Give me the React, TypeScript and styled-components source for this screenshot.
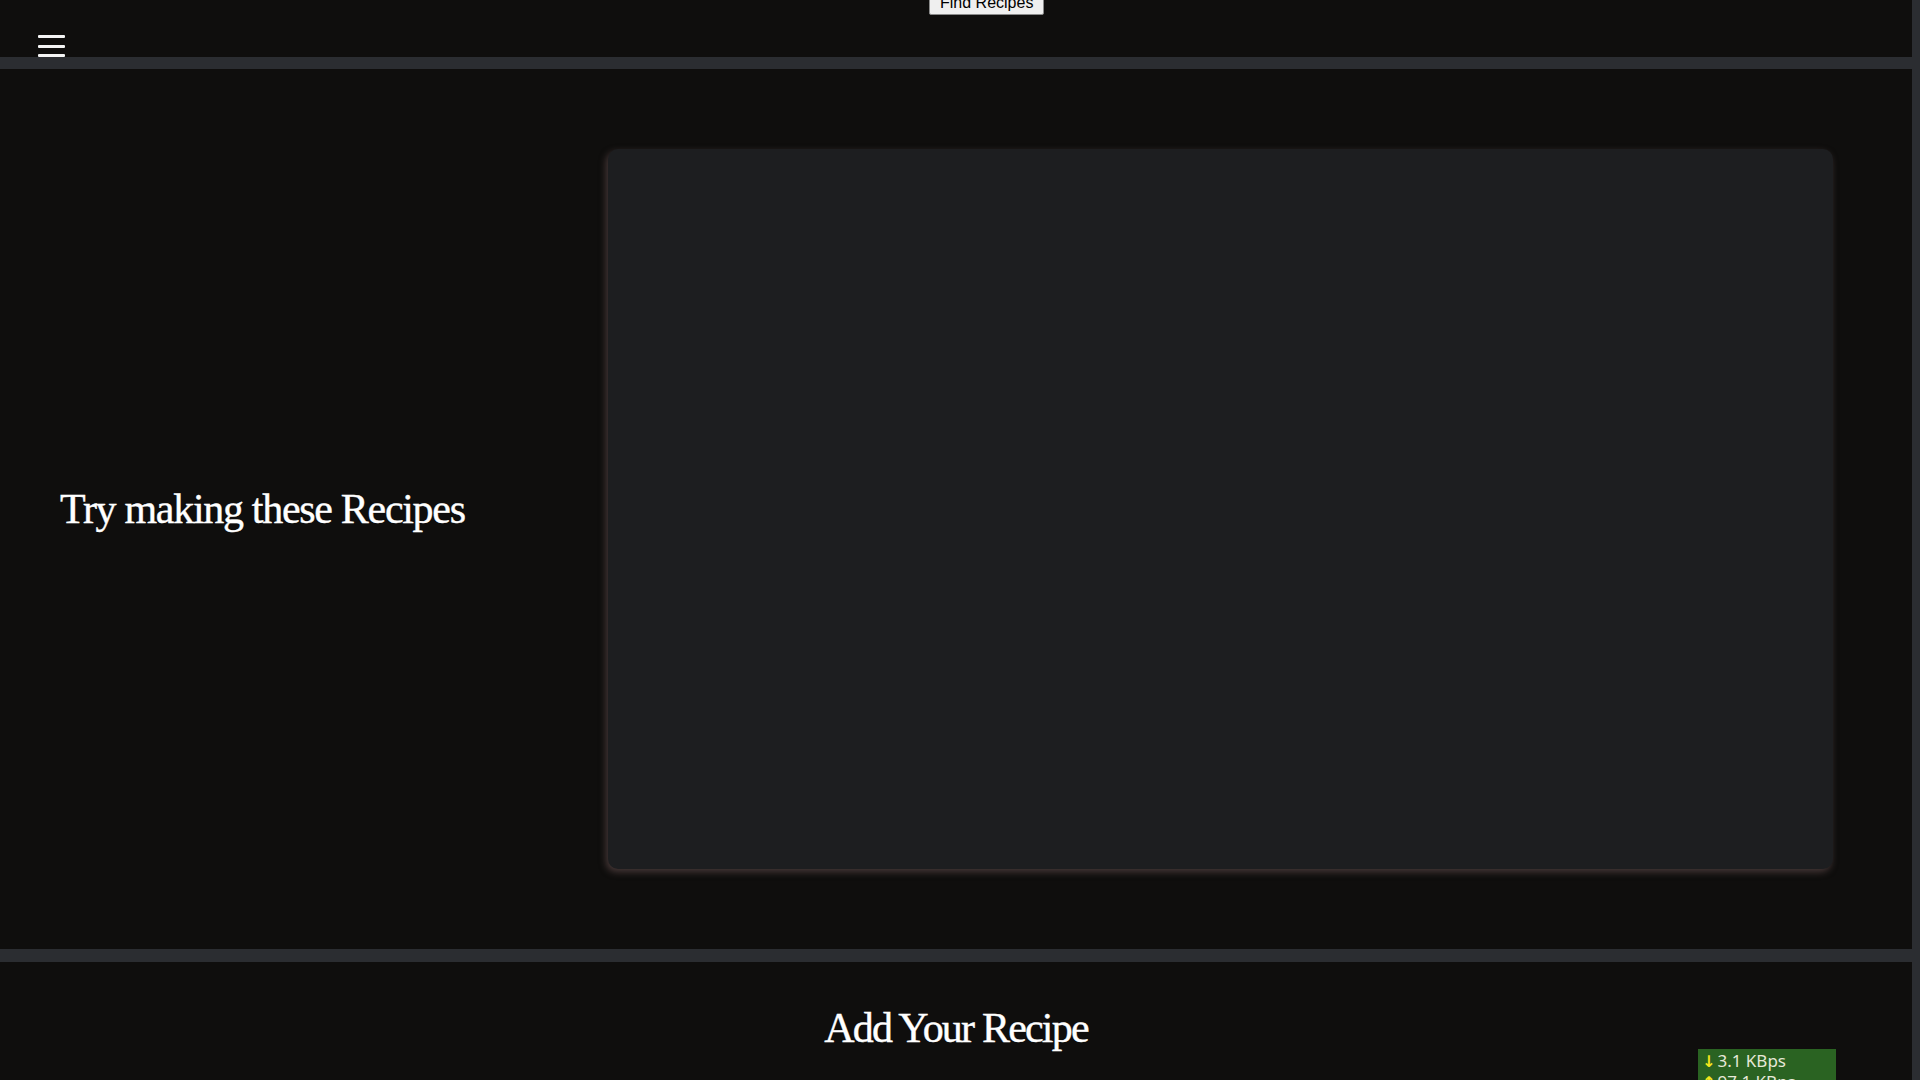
import React from "react";
import styled, { createGlobalStyle } from "styled-components";

const GlobalStyle = createGlobalStyle`
  html, body {
    margin: 0;
    padding: 0;
    height: 100%;
    overflow: hidden;
    background: #0f0e0d;
  }
  #root {
    height: 100%;
  }
`;

const Page = styled.div`
  display: flex;
  height: 100vh;
  background: #0f0e0d;
`;

const Main = styled.div`
  flex: 1;
  display: flex;
  flex-direction: column;
  min-width: 0;
`;

const Strip = styled.div`
  width: 8px;
  flex: none;
  background: #2b2d31;
`;

const Header = styled.header`
  height: 57px;
  display: flex;
  align-items: flex-start;
  flex: none;
`;

const Hamburger = styled.button`
  display: flex;
  flex-direction: column;
  gap: 6.5px;
  margin: 35px 0 0 38px;
  padding: 0;
  border: 0;
  background: transparent;
  cursor: pointer;
`;

const Bar = styled.span`
  display: block;
  width: 27px;
  height: 3px;
  border-radius: 1px;
  background: #f4f4f4;
`;

const SearchButton = styled.button`
  margin: -8px 0 0 864px;
  padding: 1px 10px 2px;
  font-family: "Liberation Sans", Arial, sans-serif;
  font-size: 16px;
  color: #000;
  background: #efefef;
  border: 1px solid #8a8a8a;
  border-radius: 2px;
  cursor: pointer;
`;

const Divider = styled.div<{ $h: number }>`
  height: ${(p) => p.$h}px;
  flex: none;
  background: #2b2d31;
`;

const Showcase = styled.section`
  height: 880px;
  box-sizing: border-box;
  flex: none;
  padding: 80px 79px 80px 60px;
  display: grid;
  grid-template-columns: 548px 1fr;
  align-items: center;
`;

const Title = styled.h2<{ $spacing?: number }>`
  margin: 0;
  font-family: "Liberation Serif", "Times New Roman", serif;
  font-weight: 400;
  font-size: 42px;
  letter-spacing: ${(p) => p.$spacing ?? -1.8}px;
  color: #ffffff;
  -webkit-text-stroke: 0.4px #ffffff;
`;

const Card = styled.div`
  height: 720px;
  background: #1d1e20;
  border-radius: 10px;
  box-shadow: -2px 3px 7px rgba(115, 90, 90, 0.55);
`;

const AddSection = styled.section`
  flex: 1;
  padding-top: 42px;
  display: flex;
  justify-content: center;
  align-items: flex-start;
`;

const NetMeter = styled.div`
  position: fixed;
  left: 1698px;
  top: 1049px;
  width: 138px;
  padding: 2px 0 0 4px;
  box-sizing: border-box;
  background: #2a6322;
  font-family: "Noto Sans", "Open Sans", sans-serif;
  font-size: 17px;
  line-height: 20px;
  color: #e6e8d8;
`;

const MeterRow = styled.div`
  display: flex;
  align-items: baseline;
  gap: 2px;
`;

const Arrow = styled.span`
  color: #f2e51c;
  font-family: "DejaVu Sans", sans-serif;
  font-weight: 700;
  font-size: 16px;
`;

export default function App() {
  return (
    <>
      <GlobalStyle />
      <Page>
        <Main>
          <Header>
            <Hamburger aria-label="Menu">
              <Bar />
              <Bar />
              <Bar />
            </Hamburger>
            <SearchButton>Find Recipes</SearchButton>
          </Header>
          <Divider $h={12} />
          <Showcase>
            <Title $spacing={-1.3}>Try making these Recipes</Title>
            <Card />
          </Showcase>
          <Divider $h={13} />
          <AddSection>
            <Title>Add Your Recipe</Title>
          </AddSection>
        </Main>
        <Strip />
      </Page>
      <NetMeter>
        <MeterRow>
          <Arrow>↓</Arrow>
          <span>3.1 KBps</span>
        </MeterRow>
        <MeterRow>
          <Arrow>↑</Arrow>
          <span>97.1 KBps</span>
        </MeterRow>
      </NetMeter>
    </>
  );
}
